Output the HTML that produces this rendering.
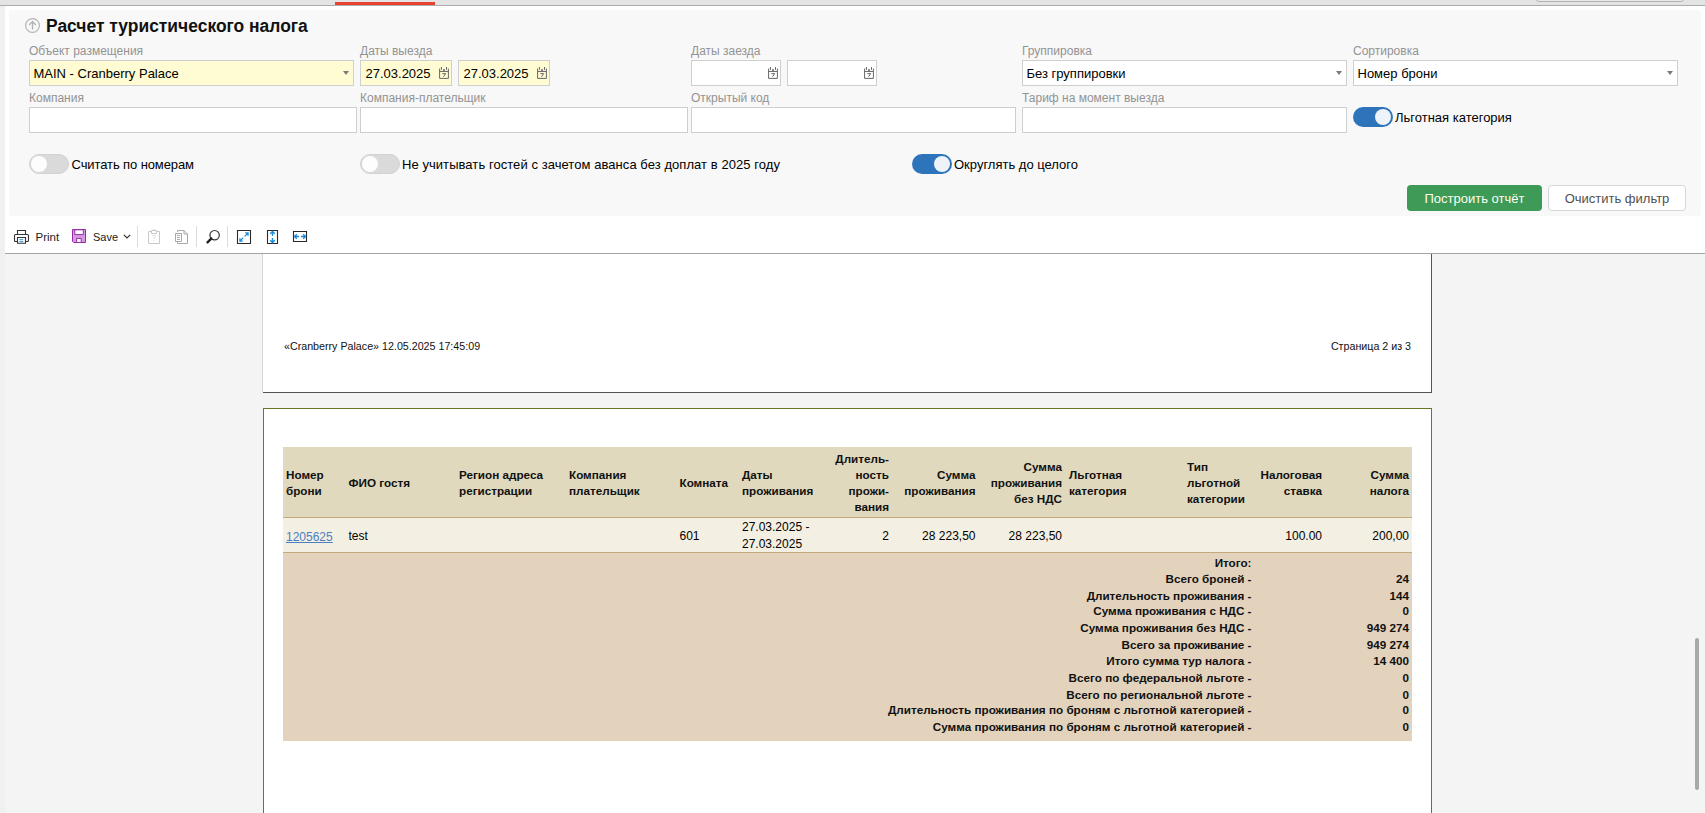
<!DOCTYPE html><html><head><meta charset="utf-8"><style>
html,body{margin:0;padding:0}
body{width:1705px;height:813px;position:relative;overflow:hidden;background:#fff;font-family:"Liberation Sans",sans-serif}
.t{position:absolute;white-space:nowrap}
svg{position:absolute;overflow:visible}
</style></head><body>
<div style="position:absolute;left:0px;top:0px;width:1705px;height:5px;background:#e4e4e4"></div>
<div style="position:absolute;left:0px;top:5px;width:1705px;height:1px;background:#acacac"></div>
<div style="position:absolute;left:335px;top:2px;width:100px;height:3px;background:#e5432f"></div>
<div style="position:absolute;left:1536px;top:-10px;width:146px;height:10px;background:#e9e9e9;border:1px solid #b3b3b3;border-radius:3px"></div>
<div style="position:absolute;left:0px;top:6px;width:5px;height:807px;background:#f0f0f0"></div>
<div style="position:absolute;left:9px;top:10px;width:1692px;height:206px;background:#f8f8f8;border-radius:3px"></div>
<svg style="left:25px;top:18px" width="15" height="15" viewBox="0 0 15 15"><circle cx="7.5" cy="7.5" r="6.9" fill="none" stroke="#b5b5b5" stroke-width="1.2"/><path d="M7.5 3.6V11.6M4.1 7L7.5 3.6L10.9 7" fill="none" stroke="#b0b0b0" stroke-width="1.3"/></svg>
<div class="t" style="left:46px;top:17.65px;font-size:17.45px;line-height:16px;font-weight:bold;color:#111;">Расчет туристического налога</div>
<div class="t" style="left:29px;top:42.64px;font-size:12px;line-height:16px;font-weight:normal;color:#939393;">Объект размещения</div>
<div class="t" style="left:360px;top:42.64px;font-size:12px;line-height:16px;font-weight:normal;color:#939393;">Даты выезда</div>
<div class="t" style="left:691px;top:42.64px;font-size:12px;line-height:16px;font-weight:normal;color:#939393;">Даты заезда</div>
<div class="t" style="left:1022px;top:42.64px;font-size:12px;line-height:16px;font-weight:normal;color:#939393;">Группировка</div>
<div class="t" style="left:1353px;top:42.64px;font-size:12px;line-height:16px;font-weight:normal;color:#939393;">Сортировка</div>
<div class="t" style="left:29px;top:90.14px;font-size:12px;line-height:16px;font-weight:normal;color:#939393;">Компания</div>
<div class="t" style="left:360px;top:90.14px;font-size:12px;line-height:16px;font-weight:normal;color:#939393;">Компания-плательщик</div>
<div class="t" style="left:691px;top:90.14px;font-size:12px;line-height:16px;font-weight:normal;color:#939393;">Открытый код</div>
<div class="t" style="left:1022px;top:90.14px;font-size:12px;line-height:16px;font-weight:normal;color:#939393;">Тариф на момент выезда</div>
<div style="position:absolute;left:29px;top:60px;width:323px;height:24px;background:#fffbd3;border:1px solid #cfcfcf"></div>
<svg style="left:343px;top:71px" width="6" height="4" viewBox="0 0 6 4"><path d="M0 0H6L3 4Z" fill="#7a7a7a"/></svg>
<div class="t" style="left:33.5px;top:65.70px;font-size:13px;line-height:16px;font-weight:normal;color:#000;">MAIN - Cranberry Palace</div>
<div style="position:absolute;left:360px;top:60px;width:90px;height:24px;background:#fffbd3;border:1px solid #cfcfcf"></div>
<div class="t" style="left:365.5px;top:65.70px;font-size:13px;line-height:16px;font-weight:normal;color:#000;">27.03.2025</div>
<svg style="left:439px;top:67px" width="10" height="12" viewBox="0 0 10 12"><path d="M0.6 1.6V11.4H9.4V1.6M0.6 4.45H9.4M2.4 0V2.8M7.5 0V2.8" fill="none" stroke="#666" stroke-width="1"/><rect x="4.3" y="2.1" width="1.4" height="2" fill="#555"/><path d="M3.3 6.6H6.6L4.5 9.8" fill="none" stroke="#666" stroke-width="1"/></svg>
<div style="position:absolute;left:458px;top:60px;width:90px;height:24px;background:#fffbd3;border:1px solid #cfcfcf"></div>
<div class="t" style="left:463.5px;top:65.70px;font-size:13px;line-height:16px;font-weight:normal;color:#000;">27.03.2025</div>
<svg style="left:537px;top:67px" width="10" height="12" viewBox="0 0 10 12"><path d="M0.6 1.6V11.4H9.4V1.6M0.6 4.45H9.4M2.4 0V2.8M7.5 0V2.8" fill="none" stroke="#666" stroke-width="1"/><rect x="4.3" y="2.1" width="1.4" height="2" fill="#555"/><path d="M3.3 6.6H6.6L4.5 9.8" fill="none" stroke="#666" stroke-width="1"/></svg>
<div style="position:absolute;left:691px;top:60px;width:88px;height:24px;background:#fff;border:1px solid #cfcfcf"></div>
<svg style="left:768px;top:67px" width="10" height="12" viewBox="0 0 10 12"><path d="M0.6 1.6V11.4H9.4V1.6M0.6 4.45H9.4M2.4 0V2.8M7.5 0V2.8" fill="none" stroke="#666" stroke-width="1"/><rect x="4.3" y="2.1" width="1.4" height="2" fill="#555"/><path d="M3.3 6.6H6.6L4.5 9.8" fill="none" stroke="#666" stroke-width="1"/></svg>
<div style="position:absolute;left:787px;top:60px;width:88px;height:24px;background:#fff;border:1px solid #cfcfcf"></div>
<svg style="left:864px;top:67px" width="10" height="12" viewBox="0 0 10 12"><path d="M0.6 1.6V11.4H9.4V1.6M0.6 4.45H9.4M2.4 0V2.8M7.5 0V2.8" fill="none" stroke="#666" stroke-width="1"/><rect x="4.3" y="2.1" width="1.4" height="2" fill="#555"/><path d="M3.3 6.6H6.6L4.5 9.8" fill="none" stroke="#666" stroke-width="1"/></svg>
<div style="position:absolute;left:1022px;top:60px;width:323px;height:24px;background:#fff;border:1px solid #cfcfcf"></div>
<svg style="left:1336px;top:71px" width="6" height="4" viewBox="0 0 6 4"><path d="M0 0H6L3 4Z" fill="#7a7a7a"/></svg>
<div class="t" style="left:1026.5px;top:65.70px;font-size:13px;line-height:16px;font-weight:normal;color:#000;">Без группировки</div>
<div style="position:absolute;left:1353px;top:60px;width:323px;height:24px;background:#fff;border:1px solid #cfcfcf"></div>
<svg style="left:1667px;top:71px" width="6" height="4" viewBox="0 0 6 4"><path d="M0 0H6L3 4Z" fill="#7a7a7a"/></svg>
<div class="t" style="left:1357.5px;top:65.70px;font-size:13px;line-height:16px;font-weight:normal;color:#000;">Номер брони</div>
<div style="position:absolute;left:29px;top:107px;width:326px;height:24px;background:#fff;border:1px solid #cfcfcf"></div>
<div style="position:absolute;left:360px;top:107px;width:326px;height:24px;background:#fff;border:1px solid #cfcfcf"></div>
<div style="position:absolute;left:691px;top:107px;width:323px;height:24px;background:#fff;border:1px solid #cfcfcf"></div>
<div style="position:absolute;left:1022px;top:107px;width:323px;height:24px;background:#fff;border:1px solid #cfcfcf"></div>
<div style="position:absolute;left:1353px;top:107px;width:40px;height:20px;background:#2e74bb;border-radius:10px"></div>
<div style="position:absolute;left:1375px;top:109px;width:16px;height:16px;background:#eef3f9;border-radius:50%"></div>
<div class="t" style="left:1395px;top:109.60px;font-size:13px;line-height:16px;font-weight:normal;color:#000;">Льготная категория</div>
<div style="position:absolute;left:29px;top:154px;width:38px;height:18px;background:#dadada;border:1px solid #d2d2d2;border-radius:10px"></div>
<div style="position:absolute;left:31px;top:156px;width:16px;height:16px;background:#fdfdfd;border-radius:50%"></div>
<div class="t" style="left:71.5px;top:156.60px;font-size:13px;line-height:16px;font-weight:normal;color:#000;letter-spacing:-0.1px;">Считать по номерам</div>
<div style="position:absolute;left:360px;top:154px;width:38px;height:18px;background:#dadada;border:1px solid #d2d2d2;border-radius:10px"></div>
<div style="position:absolute;left:362px;top:156px;width:16px;height:16px;background:#fdfdfd;border-radius:50%"></div>
<div class="t" style="left:402px;top:156.60px;font-size:13px;line-height:16px;font-weight:normal;color:#000;letter-spacing:0.06px;">Не учитывать гостей с зачетом аванса без доплат в 2025 году</div>
<div style="position:absolute;left:912px;top:154px;width:40px;height:20px;background:#2e74bb;border-radius:10px"></div>
<div style="position:absolute;left:934px;top:156px;width:16px;height:16px;background:#eef3f9;border-radius:50%"></div>
<div class="t" style="left:954px;top:156.60px;font-size:13px;line-height:16px;font-weight:normal;color:#000;">Округлять до целого</div>
<div style="position:absolute;left:1407px;top:185px;width:135px;height:26px;background:#3d9a57;border-radius:4px"></div>
<div class="t" style="left:1474.5px;top:190.70px;font-size:13px;line-height:16px;font-weight:normal;color:#fffef0;transform:translateX(-50%);">Построить отчёт</div>
<div style="position:absolute;left:1548px;top:185px;width:136px;height:24px;background:#fff;border:1px solid #d6d6d6;border-radius:4px"></div>
<div class="t" style="left:1617px;top:190.70px;font-size:13px;line-height:16px;font-weight:normal;color:#505050;transform:translateX(-50%);">Очистить фильтр</div>
<div style="position:absolute;left:5px;top:254px;width:1700px;height:559px;background:#f4f4f4"></div>
<div style="position:absolute;left:262px;top:240px;width:1px;height:152px;background:#d6d6d6"></div>
<div style="position:absolute;left:263px;top:240px;width:1168px;height:152px;background:#fff;border-right:1px solid #555;border-bottom:1px solid #555"></div>
<div class="t" style="left:284px;top:338.29px;font-size:10.7px;line-height:16px;font-weight:normal;color:#111;">«Cranberry Palace» 12.05.2025 17:45:09</div>
<div class="t" style="right:294px;top:338.29px;font-size:10.7px;line-height:16px;font-weight:normal;color:#111;">Страница 2 из 3</div>
<div style="position:absolute;left:5px;top:216px;width:1700px;height:37px;background:#fff"></div>
<div style="position:absolute;left:5px;top:253px;width:1700px;height:1px;background:#a4a4a4"></div>
<svg style="left:14px;top:229px" width="15" height="16" viewBox="0 0 15 16"><path d="M3.5 5V1.5H11.5V5" fill="none" stroke="#333" stroke-width="1.1"/><path d="M3 12.5H1.5Q0.5 12.5 0.5 11.5V6.5Q0.5 5.5 1.5 5.5H13.5Q14.5 5.5 14.5 6.5V11.5Q14.5 12.5 13.5 12.5H12" fill="none" stroke="#333" stroke-width="1.1"/><path d="M3.5 8.5H11.5V14.3H3.5Z" fill="#fff" stroke="#333" stroke-width="1.1"/><path d="M5.5 10.7H9.2M5.5 12.6H9.2" stroke="#1e88d8" stroke-width="0.9"/></svg>
<div class="t" style="left:35.5px;top:229.02px;font-size:11.5px;line-height:16px;font-weight:normal;color:#222;">Print</div>
<svg style="left:72px;top:229px" width="15" height="15" viewBox="0 0 15 15"><path d="M0.5 0.5H13.5V13.5H1.8L0.5 12.2Z" fill="#d69ae0" stroke="#9629a8" stroke-width="1"/><path d="M2.8 0.8H11.3V5.6H2.8Z" fill="#fff" stroke="#9629a8" stroke-width="1"/><path d="M4.6 9.4H9.2V13.5H4.6Z" fill="#fff" stroke="#9629a8" stroke-width="1"/></svg>
<div class="t" style="left:93px;top:229.19px;font-size:11px;line-height:16px;font-weight:normal;color:#222;">Save</div>
<svg style="left:123px;top:234px" width="8" height="5" viewBox="0 0 8 5"><path d="M0.8 0.8L4 4L7.2 0.8" fill="none" stroke="#333" stroke-width="1.2"/></svg>
<div style="position:absolute;left:137px;top:226px;width:1px;height:21px;background:#dcdcdc"></div>
<svg style="left:148px;top:229px" width="12" height="15" viewBox="0 0 12 15"><path d="M3 2.5H0.5V14.5H11.5V2.5H9" fill="none" stroke="#c9c9c9" stroke-width="1"/><path d="M3.5 1.5H8.5V4.5H3.5Z" fill="#fff" stroke="#c9c9c9" stroke-width="1"/><path d="M6 0V1.5" stroke="#c9c9c9" stroke-width="1"/><path d="M4.5 7.5Q4.5 6.3 6 6.3Q7.5 6.3 7.5 7.5Q7.5 8.5 6 9V10M6 11V12" fill="none" stroke="#d2d2d2" stroke-width="0.8"/></svg>
<svg style="left:175px;top:230px" width="14" height="14" viewBox="0 0 14 14"><path d="M2.5 2V0.5H9L12.5 4V13.5H2.5V12" fill="none" stroke="#a9a9a9" stroke-width="1"/><path d="M9 0.5V4H12.5" fill="none" stroke="#a9a9a9" stroke-width="1"/><path d="M0.5 3.5H6.5V11.5H0.5Z" fill="#fff" stroke="#a9a9a9" stroke-width="1"/><path d="M2 5.5H5M2 7.5H5M2 9.5H5" stroke="#a9a9a9" stroke-width="0.9"/></svg>
<div style="position:absolute;left:196px;top:226px;width:1px;height:21px;background:#dcdcdc"></div>
<svg style="left:206px;top:229px" width="15" height="15" viewBox="0 0 15 15"><circle cx="8.6" cy="6.2" r="4.7" fill="none" stroke="#333" stroke-width="1.2"/><path d="M5.2 9.6L1.5 13.3" stroke="#222" stroke-width="2.4" stroke-linecap="round"/></svg>
<div style="position:absolute;left:227px;top:226px;width:1px;height:21px;background:#dcdcdc"></div>
<svg style="left:237px;top:230px" width="14" height="14" viewBox="0 0 14 14"><path d="M0.5 0.5H13.5V13.5H0.5Z" fill="none" stroke="#2a2a2a" stroke-width="1.1"/><path d="M7.6 6.4L11 3M8.2 2.9H11.1V5.8" fill="none" stroke="#1c8ad6" stroke-width="1.2"/><path d="M6.4 7.6L3 11M2.9 8.2V11.1H5.8" fill="none" stroke="#1c8ad6" stroke-width="1.2"/></svg>
<svg style="left:267px;top:230px" width="11" height="14" viewBox="0 0 11 14"><path d="M0.5 0.5H10.5V13.5H0.5Z" fill="none" stroke="#2a2a2a" stroke-width="1.1"/><path d="M5.5 1.5V6M3.2 3.8L5.5 1.5L7.8 3.8" fill="none" stroke="#1c8ad6" stroke-width="1.4"/><path d="M5.5 8V12.5M3.2 10.2L5.5 12.5L7.8 10.2" fill="none" stroke="#1c8ad6" stroke-width="1.4"/></svg>
<svg style="left:293px;top:231px" width="14" height="11" viewBox="0 0 14 11"><path d="M0.5 0.5H13.5V10.5H0.5Z" fill="none" stroke="#2a2a2a" stroke-width="1.1"/><path d="M1.5 5.5H6M3.8 3.2L1.5 5.5L3.8 7.8" fill="none" stroke="#1c8ad6" stroke-width="1.4"/><path d="M8 5.5H12.5M10.2 3.2L12.5 5.5L10.2 7.8" fill="none" stroke="#1c8ad6" stroke-width="1.4"/></svg>
<div style="position:absolute;left:263px;top:408px;width:1167px;height:420px;background:#fff;border:1px solid #647828"></div>
<div style="position:absolute;left:283px;top:447px;width:1129px;height:70px;background:#e0d9bd"></div>
<div style="position:absolute;left:283px;top:517px;width:1129px;height:1px;background:#c4a97c"></div>
<div style="position:absolute;left:283px;top:518px;width:1129px;height:34px;background:#f3efe2"></div>
<div style="position:absolute;left:283px;top:552px;width:1129px;height:1px;background:#c4a97c"></div>
<div style="position:absolute;left:283px;top:553px;width:1129px;height:188px;background:#e3d3bd"></div>
<div class="t" style="left:286px;top:466.95px;font-size:11.7px;line-height:16px;font-weight:bold;color:#111;">Номер</div>
<div class="t" style="left:286px;top:482.95px;font-size:11.7px;line-height:16px;font-weight:bold;color:#111;">брони</div>
<div class="t" style="left:348.5px;top:474.95px;font-size:11.7px;line-height:16px;font-weight:bold;color:#111;">ФИО гостя</div>
<div class="t" style="left:459px;top:466.95px;font-size:11.7px;line-height:16px;font-weight:bold;color:#111;">Регион адреса</div>
<div class="t" style="left:459px;top:482.95px;font-size:11.7px;line-height:16px;font-weight:bold;color:#111;">регистрации</div>
<div class="t" style="left:569px;top:466.95px;font-size:11.7px;line-height:16px;font-weight:bold;color:#111;">Компания</div>
<div class="t" style="left:569px;top:482.95px;font-size:11.7px;line-height:16px;font-weight:bold;color:#111;">плательщик</div>
<div class="t" style="left:679.5px;top:474.95px;font-size:11.7px;line-height:16px;font-weight:bold;color:#111;">Комната</div>
<div class="t" style="left:742px;top:466.95px;font-size:11.7px;line-height:16px;font-weight:bold;color:#111;">Даты</div>
<div class="t" style="left:742px;top:482.95px;font-size:11.7px;line-height:16px;font-weight:bold;color:#111;">проживания</div>
<div class="t" style="right:816px;top:450.75px;font-size:11.7px;line-height:16px;font-weight:bold;color:#111;">Длитель-</div>
<div class="t" style="right:816px;top:466.75px;font-size:11.7px;line-height:16px;font-weight:bold;color:#111;">ность</div>
<div class="t" style="right:816px;top:482.75px;font-size:11.7px;line-height:16px;font-weight:bold;color:#111;">прожи-</div>
<div class="t" style="right:816px;top:498.75px;font-size:11.7px;line-height:16px;font-weight:bold;color:#111;">вания</div>
<div class="t" style="right:729.5px;top:466.95px;font-size:11.7px;line-height:16px;font-weight:bold;color:#111;">Сумма</div>
<div class="t" style="right:729.5px;top:482.95px;font-size:11.7px;line-height:16px;font-weight:bold;color:#111;">проживания</div>
<div class="t" style="right:643px;top:458.75px;font-size:11.7px;line-height:16px;font-weight:bold;color:#111;">Сумма</div>
<div class="t" style="right:643px;top:474.75px;font-size:11.7px;line-height:16px;font-weight:bold;color:#111;">проживания</div>
<div class="t" style="right:643px;top:490.75px;font-size:11.7px;line-height:16px;font-weight:bold;color:#111;">без НДС</div>
<div class="t" style="left:1069px;top:466.95px;font-size:11.7px;line-height:16px;font-weight:bold;color:#111;">Льготная</div>
<div class="t" style="left:1069px;top:482.95px;font-size:11.7px;line-height:16px;font-weight:bold;color:#111;">категория</div>
<div class="t" style="left:1187px;top:458.75px;font-size:11.7px;line-height:16px;font-weight:bold;color:#111;">Тип</div>
<div class="t" style="left:1187px;top:474.75px;font-size:11.7px;line-height:16px;font-weight:bold;color:#111;">льготной</div>
<div class="t" style="left:1187px;top:490.75px;font-size:11.7px;line-height:16px;font-weight:bold;color:#111;">категории</div>
<div class="t" style="right:383px;top:466.95px;font-size:11.7px;line-height:16px;font-weight:bold;color:#111;">Налоговая</div>
<div class="t" style="right:383px;top:482.95px;font-size:11.7px;line-height:16px;font-weight:bold;color:#111;">ставка</div>
<div class="t" style="right:296px;top:466.95px;font-size:11.7px;line-height:16px;font-weight:bold;color:#111;">Сумма</div>
<div class="t" style="right:296px;top:482.95px;font-size:11.7px;line-height:16px;font-weight:bold;color:#111;">налога</div>
<div class="t" style="left:286px;top:528.64px;font-size:12px;line-height:16px;font-weight:normal;color:#4a7fc4;text-decoration:underline;">1205625</div>
<div class="t" style="left:348.5px;top:528.24px;font-size:12px;line-height:16px;font-weight:normal;color:#000;">test</div>
<div class="t" style="left:679.5px;top:528.24px;font-size:12px;line-height:16px;font-weight:normal;color:#000;">601</div>
<div class="t" style="left:742px;top:519.04px;font-size:12px;line-height:16px;font-weight:normal;color:#000;">27.03.2025 -</div>
<div class="t" style="left:742px;top:536.04px;font-size:12px;line-height:16px;font-weight:normal;color:#000;">27.03.2025</div>
<div class="t" style="right:816px;top:528.24px;font-size:12px;line-height:16px;font-weight:normal;color:#000;">2</div>
<div class="t" style="right:729.5px;top:528.24px;font-size:12px;line-height:16px;font-weight:normal;color:#000;">28 223,50</div>
<div class="t" style="right:643px;top:528.24px;font-size:12px;line-height:16px;font-weight:normal;color:#000;">28 223,50</div>
<div class="t" style="right:383px;top:528.24px;font-size:12px;line-height:16px;font-weight:normal;color:#000;">100.00</div>
<div class="t" style="right:296px;top:528.24px;font-size:12px;line-height:16px;font-weight:normal;color:#000;">200,00</div>
<div class="t" style="right:453.5px;top:554.65px;font-size:11.7px;line-height:16px;font-weight:bold;color:#111;">Итого:</div>
<div class="t" style="right:453.5px;top:570.65px;font-size:11.7px;line-height:16px;font-weight:bold;color:#111;">Всего броней -</div>
<div class="t" style="right:296px;top:570.65px;font-size:11.7px;line-height:16px;font-weight:bold;color:#111;">24</div>
<div class="t" style="right:453.5px;top:587.55px;font-size:11.7px;line-height:16px;font-weight:bold;color:#111;">Длительность проживания -</div>
<div class="t" style="right:296px;top:587.55px;font-size:11.7px;line-height:16px;font-weight:bold;color:#111;">144</div>
<div class="t" style="right:453.5px;top:603.45px;font-size:11.7px;line-height:16px;font-weight:bold;color:#111;">Сумма проживания с НДС -</div>
<div class="t" style="right:296px;top:603.45px;font-size:11.7px;line-height:16px;font-weight:bold;color:#111;">0</div>
<div class="t" style="right:453.5px;top:619.55px;font-size:11.7px;line-height:16px;font-weight:bold;color:#111;">Сумма проживания без НДС -</div>
<div class="t" style="right:296px;top:619.55px;font-size:11.7px;line-height:16px;font-weight:bold;color:#111;">949 274</div>
<div class="t" style="right:453.5px;top:636.65px;font-size:11.7px;line-height:16px;font-weight:bold;color:#111;">Всего за проживание -</div>
<div class="t" style="right:296px;top:636.65px;font-size:11.7px;line-height:16px;font-weight:bold;color:#111;">949 274</div>
<div class="t" style="right:453.5px;top:652.85px;font-size:11.7px;line-height:16px;font-weight:bold;color:#111;">Итого сумма тур налога -</div>
<div class="t" style="right:296px;top:652.85px;font-size:11.7px;line-height:16px;font-weight:bold;color:#111;">14 400</div>
<div class="t" style="right:453.5px;top:670.35px;font-size:11.7px;line-height:16px;font-weight:bold;color:#111;">Всего по федеральной льготе -</div>
<div class="t" style="right:296px;top:670.35px;font-size:11.7px;line-height:16px;font-weight:bold;color:#111;">0</div>
<div class="t" style="right:453.5px;top:686.55px;font-size:11.7px;line-height:16px;font-weight:bold;color:#111;">Всего по региональной льготе -</div>
<div class="t" style="right:296px;top:686.55px;font-size:11.7px;line-height:16px;font-weight:bold;color:#111;">0</div>
<div class="t" style="right:453.5px;top:702.35px;font-size:11.7px;line-height:16px;font-weight:bold;color:#111;">Длительность проживания по броням с льготной категорией -</div>
<div class="t" style="right:296px;top:702.35px;font-size:11.7px;line-height:16px;font-weight:bold;color:#111;">0</div>
<div class="t" style="right:453.5px;top:719.35px;font-size:11.7px;line-height:16px;font-weight:bold;color:#111;">Сумма проживания по броням с льготной категорией -</div>
<div class="t" style="right:296px;top:719.35px;font-size:11.7px;line-height:16px;font-weight:bold;color:#111;">0</div>
<div style="position:absolute;left:1695px;top:638px;width:4px;height:152px;background:#a8a8a8;border-radius:2px"></div>
</body></html>
